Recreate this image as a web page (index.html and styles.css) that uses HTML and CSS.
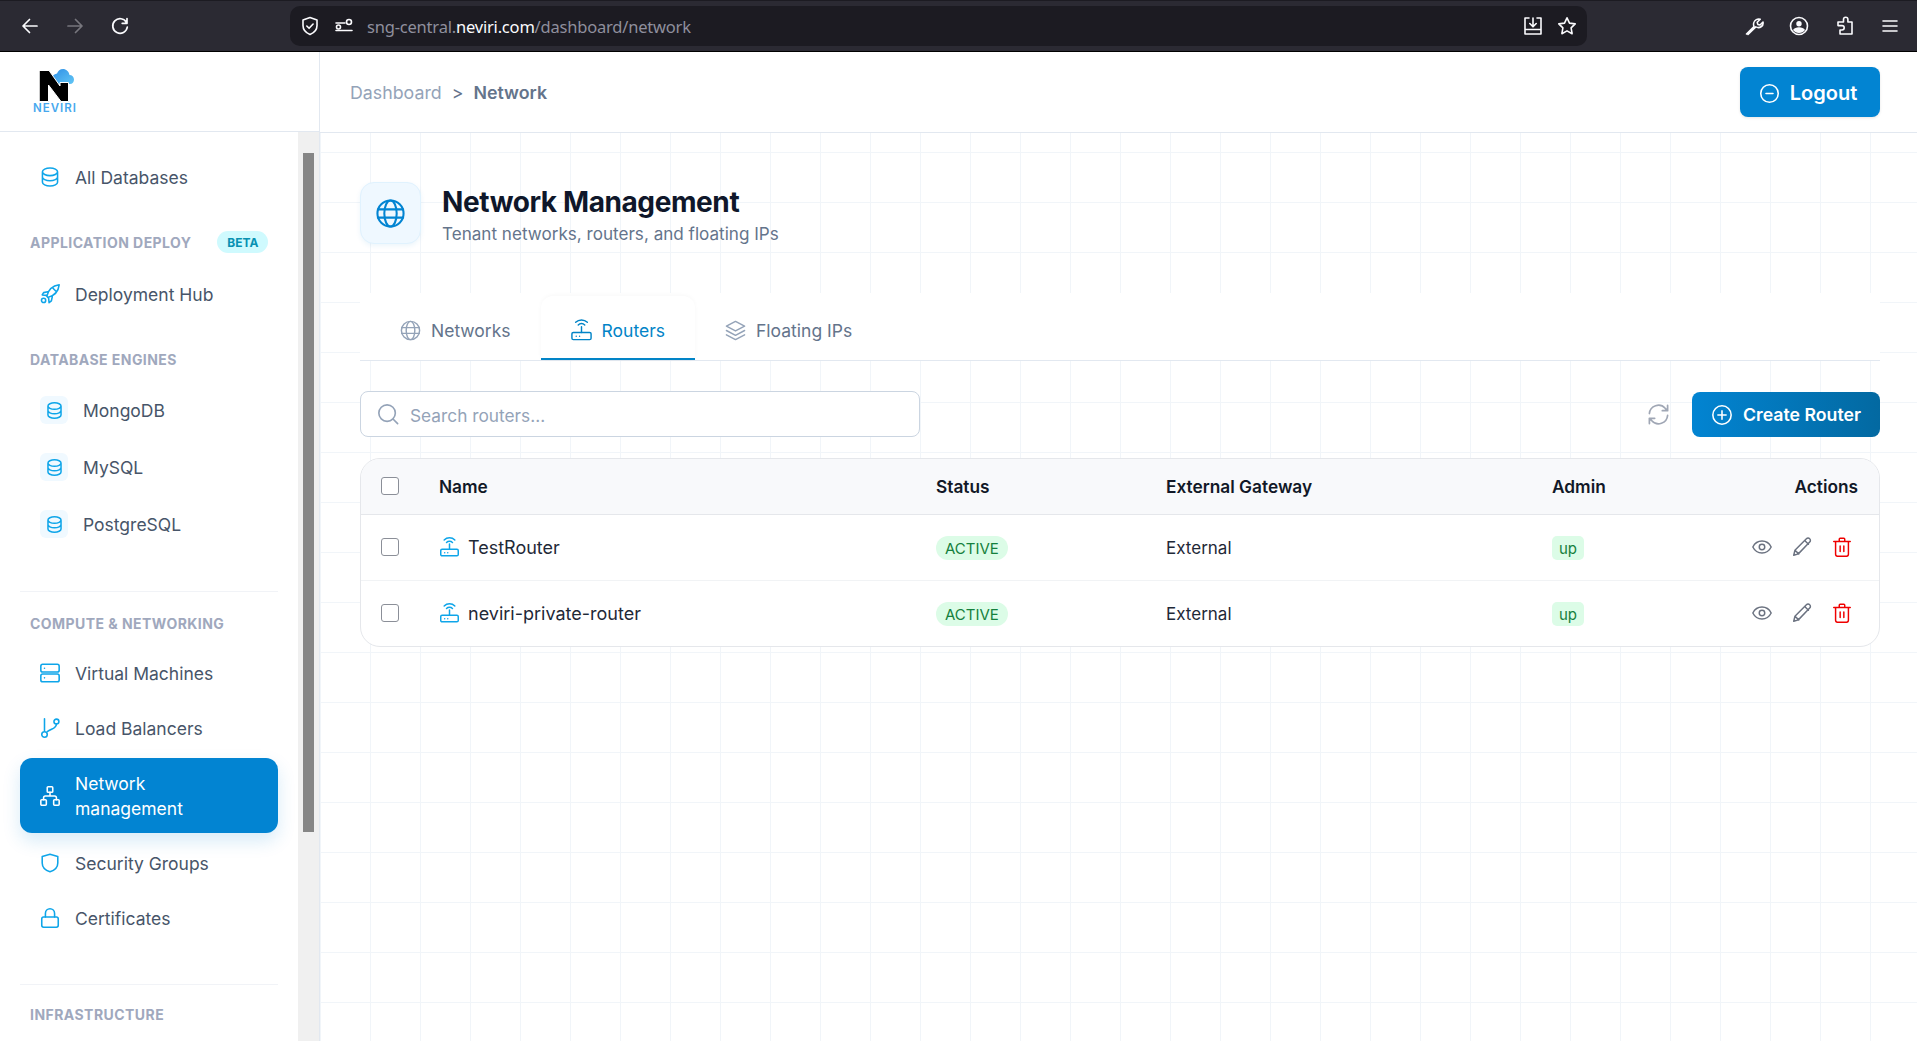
FILE: index.html
```html
<!DOCTYPE html>
<html lang="en">
<head>
    <meta charset="UTF-8">
    <title>Network Management</title>
    <link rel="stylesheet" href="styles.css">
</head>
<body>
    <svg class="sprites" width="0" height="0">
        <symbol id="i-db" viewBox="1 0 22 24"><path d="M20.250 6.375c0 2.278-3.694 4.125-8.250 4.125S3.750 8.653 3.750 6.375m16.500 0c0-2.278-3.694-4.125-8.250-4.125S3.750 4.097 3.750 6.375m16.500 0v11.250c0 2.278-3.694 4.125-8.250 4.125s-8.250-1.847-8.250-4.125V6.375m16.500 5.625c0 2.278-3.694 4.125-8.250 4.125S3.750 14.278 3.750 12"/></symbol>
        <symbol id="i-router" viewBox="0 0 24 24"><path d="M12 8v6M8.600 6.200a4.800 4.800 0 0 1 6.800 0M5.900 3.500a8.600 8.600 0 0 1 12.200 0"/><rect x="2" y="14" width="20" height="7.500" rx="1.500"/><path d="M6.500 18h.01M10 18h.01"/></symbol>
        <symbol id="i-globe" viewBox="0 0 24 24"><circle cx="12" cy="12" r="9.500"/><ellipse cx="12" cy="12" rx="4.500" ry="9.500"/><path d="M2.800 9h18.400M2.800 15h18.400"/></symbol>
        <symbol id="i-eye" viewBox="0 0 24 24"><path d="M2 12c2-4 5.500-6.500 10-6.500s8 2.500 10 6.500c-2 4-5.500 6.500-10 6.500S4 16 2 12Z"/><circle cx="12" cy="12" r="3"/></symbol>
        <symbol id="i-pencil" viewBox="0 0 24 24"><path d="M3 21l1.300-5.500L16.800 3a2.500 2.500 0 0 1 3.600 0 2.500 2.500 0 0 1 0 3.600L8 19.500 3 21ZM4.300 15.500l4.200 4M15 5l4 4"/></symbol>
        <symbol id="i-trash" viewBox="0 0 24 24"><path d="M3 6h18M9 6V3.500a1 1 0 0 1 1-1h4a1 1 0 0 1 1 1V6M5 6v14a2 2 0 0 0 2 2h10a2 2 0 0 0 2-2V6M10 11v6M14 11v6"/></symbol>
    </svg>

    <div class="browser">
        <button class="tool-btn"><svg viewBox="0 0 20 20"><path d="M17 10H3.500M9.500 3.500 3 10l6.500 6.500"/></svg></button>
        <button class="tool-btn dim"><svg viewBox="0 0 20 20"><path d="M3 10h13.500M10.500 3.500 17 10l-6.500 6.500"/></svg></button>
        <button class="tool-btn"><svg viewBox="0 0 20 20"><path d="M16.500 6.500A7.300 7.300 0 1 0 17.300 11M17 2.500v4.800h-4.800"/></svg></button>
        <div class="urlbar">
            <svg class="url-icon" viewBox="0 0 20 20"><path d="M10 1.500 17 4v5.500c0 4-2.800 7.300-7 9-4.200-1.700-7-5-7-9V4l7-2.500Z"/><path d="m6.800 10 2.300 2.300 4-4.300"/></svg>
            <svg class="url-icon sliders" viewBox="0 0 20 20"><path d="M2 7h9M2 14.500h16"/><circle cx="15" cy="6" r="2.500"/><circle cx="4.500" cy="11" r="2"/></svg>
            <span class="url-text">sng-central.<b>neviri.com</b>/dashboard/network</span>
            <svg class="url-icon push" viewBox="0 0 20 20"><path d="M6 2H2v16h16V2h-4M2 13.500h16M10 2v8M6.800 7.500 10 10.800l3.200-3.300"/></svg>
            <svg class="url-icon" viewBox="0 0 20 20"><path d="m10 1.800 2.500 5.300 5.700.8-4.100 4 1 5.800-5.100-2.800-5.100 2.800 1-5.800-4.100-4 5.700-.8Z"/></svg>
        </div>
        <div class="browser-end">
            <svg class="tool-icon" viewBox="0 0 20 20"><path d="M2.500 18 10 10.500c-1-2.500-.2-5.500 2.300-6.900 1.300-.7 2.700-.8 3.900-.4l-3 3 .6 2.200 2.200.6 3-3c.3 1.700-.2 3.500-1.600 4.500-1.700 1.300-3.900 1.300-5.600.4L4 18.500"/></svg>
            <svg class="tool-icon" viewBox="0 0 20 20"><circle cx="10" cy="10" r="8.500"/><circle cx="10" cy="7.800" r="2.700" class="solid"/><path class="solid" d="M4 14c1-2 3.500-2.800 6-2.800s5 .8 6 2.800c-1.500 2-3.500 3-6 3s-4.500-1-6-3Z"/></svg>
            <svg class="tool-icon" viewBox="0 0 20 20"><path d="M8.500 3.500a2.200 2.200 0 0 1 4.400 0V6H17v12H5v-4h2a2.200 2.200 0 0 0 0-4.400H3V6h5.500V3.500Z"/></svg>
            <svg class="tool-icon" viewBox="0 0 20 20"><path d="M3 5h14M3 10h14M3 15h14"/></svg>
        </div>
    </div>

    <div class="app">
        <aside class="sidebar">
            <div class="brand">
                <div class="logo">
                    <svg viewBox="0 0 44 34" width="44" height="34">
                        <defs><linearGradient id="cloud" x1="0" y1="0" x2="1" y2="1"><stop offset="0" stop-color="#2f8fe6"/><stop offset="1" stop-color="#62c6f5"/></linearGradient></defs>
                        <path fill="url(#cloud)" d="M25 15h12c2.500 0 4-2 4-4.500s-2-4.500-4.500-4.500C36 2.500 33 0 30 0c-3 0-5 2-6 4.500C21 5 19 7 19 10c0 1.500 1 3 2.500 4Z"/>
                        <polygon fill="#000" stroke="#fff" stroke-width="1" points="6.500,1.500 16,1.500 27,17 27,13.500 35.500,13.500 35.500,32.500 28,32.500 15.500,16 15.500,32.500 6.500,32.500"/>
                    </svg>
                    <span class="logo-name">NEVIRI</span>
                </div>
            </div>
            <div class="side-body">
                <nav class="nav">
                    <a class="nav-item first"><svg class="nav-icon"><use href="#i-db"/></svg>All Databases</a>

                    <div class="nav-label deploy">Application Deploy <span class="beta">BETA</span></div>
                    <a class="nav-item"><svg class="nav-icon" viewBox="0 0 24 24"><path d="M8.500 14.500C10 8 15 3 22 2c-.8 7-5.800 12-12.300 13.700L8.500 14.500ZM15 5.500l3.500 3.500M9.500 9.500 5 10.500 3.500 13l4.500.5M14.500 15l-1 4.500-2.500 2-.5-5"/><circle cx="5" cy="19" r="2.300"/></svg>Deployment Hub</a>

                    <div class="nav-label engines">Database Engines</div>
                    <div class="engine-list">
                        <a class="nav-item engine"><span class="engine-box"><svg><use href="#i-db"/></svg></span>MongoDB</a>
                        <a class="nav-item engine"><span class="engine-box"><svg><use href="#i-db"/></svg></span>MySQL</a>
                        <a class="nav-item engine"><span class="engine-box"><svg><use href="#i-db"/></svg></span>PostgreSQL</a>
                    </div>

                    <hr class="nav-sep">
                    <div class="nav-label compute">Compute &amp; Networking</div>
                    <div class="nav-list">
                        <a class="nav-item"><svg class="nav-icon" viewBox="0 0 24 24"><rect x="2" y="2.500" width="20" height="8.500" rx="2"/><rect x="2" y="13" width="20" height="8.500" rx="2"/><path d="M6 6.800h.01M6 17.300h.01"/></svg>Virtual Machines</a>
                        <a class="nav-item"><svg class="nav-icon" viewBox="0 0 24 24"><path d="M6 2v13M19 7.500c0 5-5 5-10 8.500"/><circle cx="6" cy="19" r="3"/><circle cx="19" cy="5" r="2.700"/></svg>Load Balancers</a>
                        <a class="nav-item active"><svg class="nav-icon" viewBox="0 0 24 24"><rect x="9" y="2" width="6" height="6" rx="1"/><rect x="2" y="16" width="6" height="6" rx="1"/><rect x="16" y="16" width="6" height="6" rx="1"/><path d="M12 8v4M5 16v-2a2 2 0 0 1 2-2h10a2 2 0 0 1 2 2v2"/></svg><span>Network<br>management</span></a>
                        <a class="nav-item"><svg class="nav-icon" viewBox="0 0 24 24"><path d="M12 2.500 20.500 5v7c0 5-3.500 8-8.500 9.500C7 20 3.500 17 3.500 12V5L12 2.500Z"/></svg>Security Groups</a>
                        <a class="nav-item"><svg class="nav-icon" viewBox="0 0 24 24"><path d="M7 11V7a5 5 0 0 1 10 0v4"/><rect x="3" y="11" width="18" height="11" rx="2"/></svg>Certificates</a>
                    </div>

                    <hr class="nav-sep lower">
                    <div class="nav-label infra">Infrastructure</div>
                </nav>
                <div class="scroll-track"><div class="scroll-thumb"></div></div>
            </div>
        </aside>

        <div class="main">
            <header class="topbar">
                <div class="crumbs">
                    <span class="crumb">Dashboard</span>
                    <span class="crumb-sep">&gt;</span>
                    <span class="crumb-now">Network</span>
                </div>
                <button class="logout"><svg viewBox="0 0 24 24"><circle cx="12" cy="12" r="10"/><path d="M8 12h8"/></svg>Logout</button>
            </header>

            <section class="content">
                <div class="page-head">
                    <div class="page-icon"><svg><use href="#i-globe"/></svg></div>
                    <div>
                        <h1>Network Management</h1>
                        <p>Tenant networks, routers, and floating IPs</p>
                    </div>
                </div>

                <div class="tabs">
                    <a class="tab"><svg><use href="#i-globe"/></svg>Networks</a>
                    <a class="tab active"><svg><use href="#i-router"/></svg>Routers</a>
                    <a class="tab"><svg viewBox="0 0 24 24"><path d="m12 2.500 9.500 5-9.500 5-9.500-5 9.500-5ZM2.500 12l9.500 5 9.500-5M2.500 16.500l9.500 5 9.500-5"/></svg>Floating IPs</a>
                </div>

                <div class="toolbar">
                    <label class="search">
                        <svg viewBox="0 0 24 24"><circle cx="11" cy="11" r="9"/><path d="m18 18 4.500 4.500"/></svg>
                        <input type="text" placeholder="Search routers...">
                    </label>
                    <svg class="refresh" viewBox="0 0 24 24"><path d="M2.500 11A9.500 9.500 0 0 1 19 5.500L21.500 8M21.500 2.500V8H16M21.500 13A9.500 9.500 0 0 1 5 18.500L2.500 16M2.500 21.500V16H8"/></svg>
                    <button class="create"><svg viewBox="0 0 24 24"><circle cx="12" cy="12" r="10"/><path d="M12 7.500v9M7.500 12h9"/></svg>Create Router</button>
                </div>

                <div class="table-wrap">
                    <table class="routers">
                        <colgroup>
                            <col class="c-check"><col class="c-name"><col class="c-status"><col class="c-gw"><col class="c-admin"><col>
                        </colgroup>
                        <thead>
                            <tr>
                                <th><span class="check"></span></th>
                                <th>Name</th>
                                <th>Status</th>
                                <th>External Gateway</th>
                                <th>Admin</th>
                                <th class="right">Actions</th>
                            </tr>
                        </thead>
                        <tbody>
                            <tr>
                                <td><span class="check"></span></td>
                                <td><span class="name"><svg><use href="#i-router"/></svg>TestRouter</span></td>
                                <td class="low"><span class="pill">ACTIVE</span></td>
                                <td class="low">External</td>
                                <td class="low"><span class="pill admin">up</span></td>
                                <td>
                                    <div class="actions">
                                        <svg><use href="#i-eye"/></svg>
                                        <svg><use href="#i-pencil"/></svg>
                                        <svg class="del"><use href="#i-trash"/></svg>
                                    </div>
                                </td>
                            </tr>
                            <tr>
                                <td><span class="check"></span></td>
                                <td><span class="name"><svg><use href="#i-router"/></svg>neviri-private-router</span></td>
                                <td class="low"><span class="pill">ACTIVE</span></td>
                                <td class="low">External</td>
                                <td class="low"><span class="pill admin">up</span></td>
                                <td>
                                    <div class="actions">
                                        <svg><use href="#i-eye"/></svg>
                                        <svg><use href="#i-pencil"/></svg>
                                        <svg class="del"><use href="#i-trash"/></svg>
                                    </div>
                                </td>
                            </tr>
                        </tbody>
                    </table>
                </div>
            </section>
        </div>
    </div>
</body>
</html>
```

FILE: styles.css
```css
* {
    box-sizing: border-box;
}

body {
    margin: 0;
    height: 100vh;
    overflow: hidden;
    display: flex;
    flex-direction: column;
    background: #fff;
    color: #1e293b;
    font-family: Inter, "Liberation Sans", sans-serif;
}

.sprites {
    position: absolute;
}

svg {
    fill: none;
    stroke: currentColor;
    stroke-linecap: round;
    stroke-linejoin: round;
    stroke-width: 2;
}

/* Browser chrome */
.browser {
    height: 52px;
    flex: none;
    display: flex;
    align-items: center;
    background: #2b2a33;
    border-top: 1px solid #1c1b22;
    border-bottom: 1px solid #000;
    color: #fbfbfe;
    padding-left: 8px;
}

.tool-btn {
    width: 45px;
    height: 40px;
    padding: 10px 12px;
    background: none;
    border: none;
    color: #fbfbfe;
}

.tool-btn.dim {
    color: #77767d;
}

.tool-btn svg {
    display: block;
    width: 20px;
    height: 20px;
    stroke-width: 1.7;
}

.urlbar {
    margin-left: 147px;
    width: 1297px;
    height: 40px;
    border-radius: 10px;
    background: #1c1b22;
    display: flex;
    align-items: center;
    padding: 0 10px;
}

.url-icon {
    width: 20px;
    height: 20px;
    stroke-width: 1.6;
    flex: none;
}

.url-icon.sliders {
    margin-left: 14px;
}

.url-icon.push {
    margin-left: auto;
    margin-right: 14px;
}

.url-text {
    margin-left: 13px;
    font: 16.500px "Noto Sans", sans-serif;
    color: #8f8f9d;
    letter-spacing: -0.2px;
}

.url-text b {
    font-weight: 400;
    color: #fbfbfe;
}

.browser-end {
    margin-left: auto;
    display: flex;
    align-items: center;
    gap: 25.500px;
    padding-right: 17px;
}

.tool-icon {
    width: 20px;
    height: 20px;
    stroke-width: 1.6;
}

.tool-icon .solid {
    fill: currentColor;
    stroke: none;
}

/* Sidebar */
.app {
    flex: 1;
    min-height: 0;
    display: flex;
}

.sidebar {
    width: 320px;
    flex: none;
    border-right: 1px solid #e2e8f0;
    display: flex;
    flex-direction: column;
}

.brand {
    height: 80px;
    flex: none;
    border-bottom: 1px solid #e2e8f0;
    padding: 17px 0 0 33px;
}

.logo {
    width: 44px;
    display: flex;
    flex-direction: column;
    align-items: center;
}

.logo svg {
    stroke: none;
    display: block;
}

.logo-name {
    font-size: 11.500px;
    line-height: 11px;
    font-weight: 600;
    color: #47a8ee;
    letter-spacing: 1px;
}

.side-body {
    flex: 1;
    min-height: 0;
    display: flex;
}

.nav {
    flex: 1;
    min-width: 0;
    overflow: hidden;
    padding: 21px 20px 0;
}

.scroll-track {
    width: 21px;
    flex: none;
    background: #f0f0f0;
    padding: 21px 5px 0;
}

.scroll-thumb {
    height: 679px;
    background: #868686;
}

.nav-item {
    display: flex;
    align-items: center;
    gap: 14px;
    height: 50px;
    padding-left: 19px;
    border-radius: 12px;
    font-size: 17.500px;
    color: #475569;
}

.nav-item.first,
.nav-item.engine {
    padding-bottom: 2px;
}

.nav-icon {
    width: 22px;
    height: 22px;
    flex: none;
    color: #0ea5e9;
    stroke-width: 1.7;
}

.nav-item.active {
    height: 75px;
    line-height: 25px;
    background: #0284d2;
    color: #fff;
    box-shadow: 0 8px 18px rgba(2, 132, 210, 0.16);
}

.nav-item.active .nav-icon {
    color: #fff;
}

.nav-label {
    height: 22px;
    display: flex;
    align-items: center;
    padding-left: 10px;
    font-size: 14px;
    font-weight: 700;
    text-transform: uppercase;
    color: #a0a8bd;
    letter-spacing: 0.450px;
}

.nav-label.deploy {
    margin-top: 28px;
    margin-bottom: 16px;
}

.nav-label.engines {
    margin-top: 29px;
    margin-bottom: 16px;
}

.nav-label.compute {
    margin-top: 20px;
    margin-bottom: 14px;
}

.nav-label.infra {
    margin-top: 18px;
}

.beta {
    margin-left: 26px;
    width: 51px;
    height: 22px;
    border-radius: 11px;
    background: #cffafe;
    color: #0891b2;
    font-size: 12px;
    font-weight: 700;
    letter-spacing: 0;
    display: flex;
    align-items: center;
    justify-content: center;
}

.engine-list {
    display: flex;
    flex-direction: column;
    gap: 7px;
}

.nav-list {
    display: flex;
    flex-direction: column;
    gap: 5px;
}

.nav-item.engine {
    padding-left: 20px;
    gap: 15px;
}

.engine-box {
    width: 28px;
    height: 28px;
    border-radius: 6px;
    background: #f0f9ff;
    color: #0ea5e9;
    display: flex;
    align-items: center;
    justify-content: center;
}

.engine-box svg {
    width: 19px;
    height: 19px;
    stroke-width: 1.9;
}

.nav-sep {
    height: 1px;
    border: none;
    background: #f1f3f7;
    margin: 41px 0 0;
}

.nav-sep.lower {
    margin-top: 41px;
}

/* Main area */
.main {
    flex: 1;
    min-width: 0;
    display: flex;
    flex-direction: column;
    background-color: #fff;
    background-image:
        linear-gradient(#f1f5f9 1px, transparent 1px),
        linear-gradient(90deg, #f1f5f9 1px, transparent 1px);
    background-size: 50px 50px;
}

.topbar {
    height: 81px;
    flex: none;
    background: #fff;
    border-bottom: 1px solid #e2e8f0;
    display: flex;
    align-items: center;
    justify-content: space-between;
    padding: 0 37px 0 30px;
}

.crumbs {
    display: flex;
    align-items: center;
    gap: 10px;
    font-size: 17.800px;
}

.crumb {
    color: #94a3b8;
}

.crumb-sep {
    color: #64748b;
}

.crumb-now {
    color: #64748b;
    font-weight: 600;
}

.logout {
    width: 140px;
    height: 50px;
    border: none;
    border-radius: 8px;
    background: #0284d2;
    color: #fff;
    font: 600 20px Inter, sans-serif;
    display: flex;
    align-items: center;
    justify-content: center;
    gap: 10px;
    padding: 2px 4px 0 0;
    box-shadow: 0 1px 3px rgba(0, 0, 0, 0.1);
}

.logout svg {
    width: 21px;
    height: 21px;
    stroke-width: 1.8;
}

.content {
    padding: 49px 37px 0 40px;
}

.page-head {
    display: flex;
    gap: 21px;
    height: 62px;
    margin-bottom: 49px;
}

.page-icon {
    width: 61px;
    height: 62px;
    border-radius: 14px;
    background: #eff8ff;
    border: 1px solid #e0f2fe;
    box-shadow: 0 2px 5px rgba(2, 132, 199, 0.08);
    color: #0284d2;
    display: flex;
    align-items: center;
    justify-content: center;
}

.page-icon svg {
    width: 33px;
    height: 33px;
    stroke-width: 1.500;
}

h1 {
    margin: 3px 0 0;
    font-size: 28px;
    line-height: 34px;
    font-weight: 700;
    color: #0f172a;
    letter-spacing: -0.400px;
}

.page-head p {
    margin: 3px 0 0;
    font-size: 17.100px;
    line-height: 24px;
    color: #64748b;
}

.tabs {
    display: flex;
    background: #fff;
    padding: 3px 0 0 10px;
    height: 68px;
    border-bottom: 1px solid #e2e8f0;
}

.tab {
    display: flex;
    align-items: center;
    gap: 9px;
    height: 64px;
    padding: 6px 30px 0 29px;
    font-size: 17.500px;
    color: #64748b;
    border-bottom: 2px solid transparent;
}

.tab svg {
    width: 23px;
    height: 23px;
    stroke-width: 1.500;
    color: #94a3b8;
}

.tab.active {
    color: #0284c7;
    border-bottom-color: #0284c7;
    border-radius: 12px 12px 0 0;
    box-shadow: 0 -1px 4px rgba(15, 23, 42, 0.03);
}

.tab.active svg {
    color: #0284c7;
}

.toolbar {
    display: flex;
    align-items: center;
    margin-top: 30px;
    height: 46px;
}

.search {
    width: 560px;
    height: 46px;
    display: flex;
    align-items: center;
    gap: 11px;
    padding-left: 16px;
    background: #fff;
    border: 1px solid #cbd5e1;
    border-radius: 8px;
}

.search svg {
    width: 22px;
    height: 22px;
    color: #94a3b8;
    stroke-width: 1.800;
    flex: none;
}

.search input {
    flex: 1;
    border: none;
    outline: none;
    background: none;
    padding: 2px 0 0;
    font: 17.300px Inter, sans-serif;
    color: #1e293b;
}

.search input::placeholder {
    color: #94a3b8;
}

.refresh {
    margin-left: auto;
    margin-right: 22px;
    width: 23px;
    height: 23px;
    color: #a0a7b5;
    stroke-width: 1.800;
}

.create {
    align-self: flex-end;
    width: 188px;
    height: 45px;
    border: none;
    border-radius: 8px;
    background: linear-gradient(90deg, #0284d2, #0369a1);
    color: #fff;
    font: 600 17.700px Inter, sans-serif;
    display: flex;
    align-items: center;
    justify-content: center;
    gap: 10px;
}

.create svg {
    width: 22px;
    height: 22px;
    stroke-width: 1.700;
}

.table-wrap {
    margin-top: 21px;
    background: #fff;
    border: 1px solid #e5e7eb;
    border-radius: 20px;
    overflow: hidden;
}

.routers {
    width: 100%;
    border-collapse: collapse;
    table-layout: fixed;
    font-size: 17px;
}

.c-check { width: 78px; }
.c-name { width: 497px; }
.c-status { width: 230px; }
.c-gw { width: 386px; }
.c-admin { width: 150px; }

.routers th,
.routers td {
    padding: 0;
    text-align: left;
}

.routers th:first-child,
.routers td:first-child {
    padding-left: 20px;
}

.routers td.low {
    padding-top: 2px;
}

.routers th {
    height: 55px;
    background: #f8f9fb;
    border-bottom: 1px solid #e5e7eb;
    color: #111827;
    font-size: 17.300px;
    font-weight: 600;
}

.routers th.right {
    text-align: right;
    padding-right: 21px;
}

.routers td {
    height: 66px;
    color: #1f2937;
}

.routers tbody tr + tr td {
    border-top: 1px solid #f1f3f5;
}

.check {
    display: block;
    width: 18px;
    height: 18px;
    border: 1px solid #8b8f98;
    border-radius: 3px;
    background: #fff;
}

.name {
    display: flex;
    align-items: center;
    gap: 8px;
    font-size: 18px;
}

.name svg {
    width: 21px;
    height: 21px;
    flex: none;
    color: #0ea5e9;
    stroke-width: 1.700;
}

.pill {
    display: inline-flex;
    align-items: center;
    height: 24px;
    padding: 0 9px;
    border-radius: 12px;
    background: #dcfce7;
    color: #15803d;
    font-size: 15px;
}

.pill.admin {
    padding: 0 7px;
    border-radius: 5px;
}

.actions {
    display: flex;
    justify-content: flex-end;
    align-items: center;
    gap: 18px;
    padding-right: 26px;
    color: #6b7280;
}

.actions svg {
    width: 22px;
    height: 22px;
    stroke-width: 1.600;
}

.actions .del {
    color: #ef0000;
}
```
